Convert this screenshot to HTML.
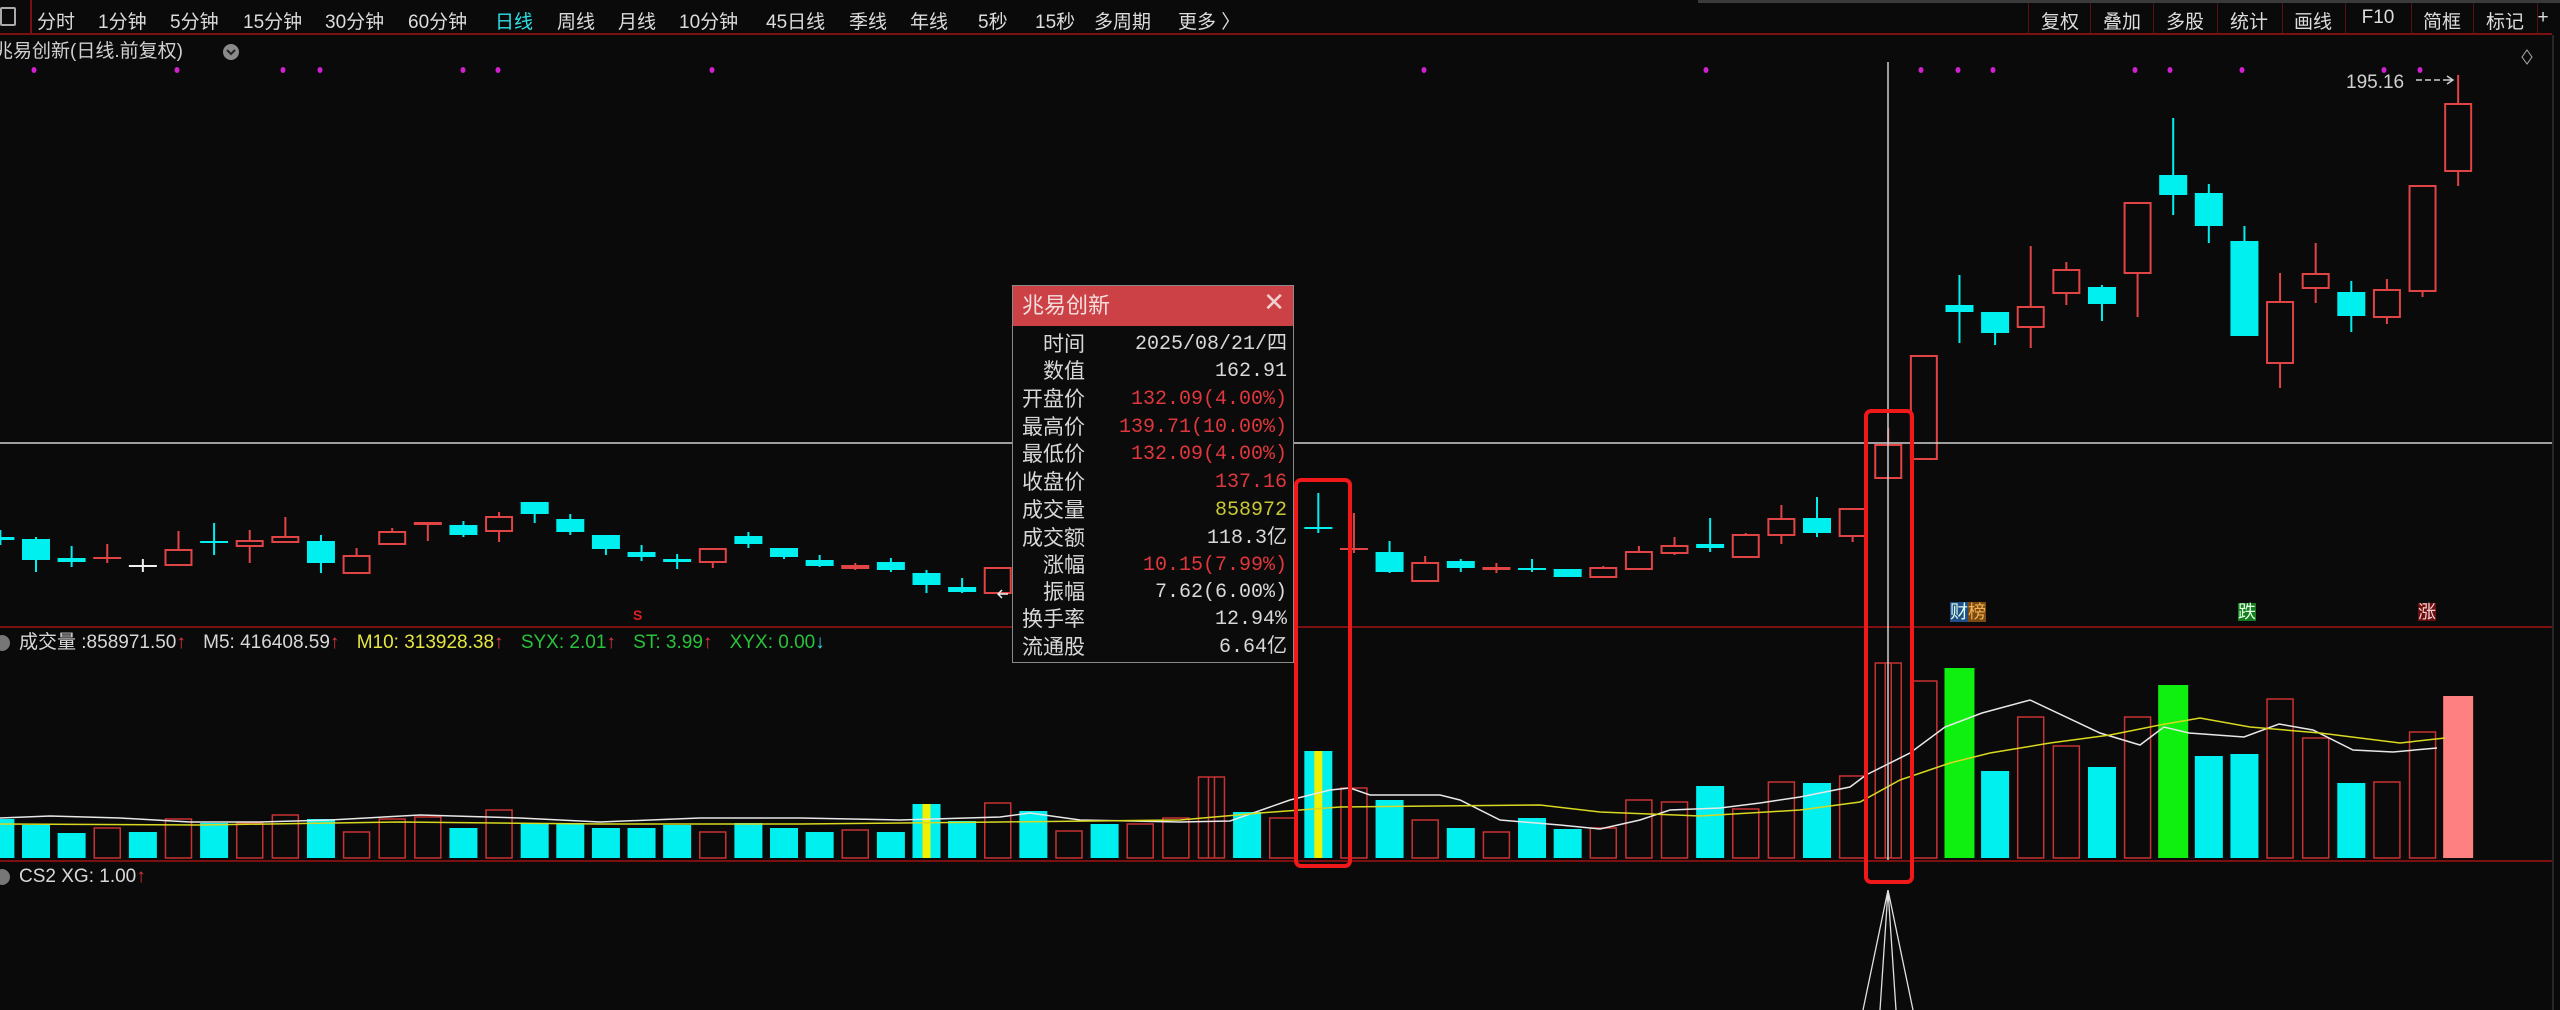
<!DOCTYPE html>
<html><head><meta charset="utf-8">
<style>
*{margin:0;padding:0;box-sizing:border-box}
body{width:2560px;height:1010px;background:#0a0a0a;overflow:hidden;position:relative;font-family:"Liberation Sans","Noto Sans CJK SC",sans-serif;color:#d8d8d8}
.t{position:absolute;white-space:nowrap;line-height:1}
#tb span{position:absolute;top:7px;font-size:19px;color:#dcdcdc}
.rb{position:absolute;top:7px;font-size:19px;color:#dcdcdc;width:60px;text-align:center}
#tip{position:absolute;left:1012px;top:285px;width:282px;height:378px;background:#0b0b0b;border:1px solid #8a8a8a;z-index:5}
#tip .hd{height:40px;background:#cc4145;color:#f4dede;font-size:22px;padding:8px 0 0 9px;position:relative;line-height:24px}
#tip .hd b{position:absolute;right:8px;top:4px;font-weight:normal;font-size:26px;color:#f0d0d0}
#tip .r{position:absolute;left:0;width:280px;height:27px;font-size:21px;line-height:27px}
#tip .l{position:absolute;right:208px;top:0;color:#d8d8d8;line-height:27px}
#tip .v{position:absolute;right:6px;top:0;font-family:"Liberation Mono","Liberation Sans",monospace;font-size:20px;line-height:27px}
.red{color:#e0373c}.wh{color:#d8d8d8}.yl{color:#c9c933}
</style></head><body>
<svg id="g" width="2560" height="1010" style="position:absolute;left:0;top:0"></svg>

<div id="tb">
<div style="position:absolute;left:0;top:7px;width:16px;height:19px;border:2px solid #aaa;border-radius:2px"></div>
<div style="position:absolute;left:30px;top:0;width:2px;height:34px;background:#7a1010"></div>
<span style="left:37px">分时</span><span style="left:98px">1分钟</span><span style="left:170px">5分钟</span><span style="left:243px">15分钟</span><span style="left:325px">30分钟</span><span style="left:408px">60分钟</span><span style="left:495px;color:#2fe0e8">日线</span><span style="left:557px">周线</span><span style="left:618px">月线</span><span style="left:679px">10分钟</span><span style="left:766px">45日线</span><span style="left:849px">季线</span><span style="left:910px">年线</span><span style="left:978px">5秒</span><span style="left:1035px">15秒</span><span style="left:1094px">多周期</span><span style="left:1178px">更多 〉</span>
</div>
<div class="rb" style="left:2030px">复权</div><div class="rb" style="left:2092px">叠加</div><div class="rb" style="left:2155px">多股</div><div class="rb" style="left:2219px">统计</div><div class="rb" style="left:2283px">画线</div><div class="rb" style="left:2348px">F10</div><div class="rb" style="left:2412px">简框</div><div class="rb" style="left:2475px">标记</div><div class="rb" style="left:2528px;width:30px">+</div>

<div class="t" style="left:-6px;top:42px;font-size:19px;color:#d0d0d0">兆易创新(日线.前复权)</div>
<div class="t" style="left:2346px;top:73px;font-size:19px;color:#d0d0d0">195.16</div>

<div class="t" style="left:19px;top:633px;font-size:19px">
<span class="wh">成交量 :858971.50</span><span class="red">↑</span>
<span class="wh" style="margin-left:12px">M5: 416408.59</span><span class="red">↑</span>
<span class="yl" style="margin-left:12px;color:#e6e640">M10: 313928.38</span><span class="red">↑</span>
<span style="margin-left:12px;color:#29c23a">SYX: 2.01</span><span class="red">↑</span>
<span style="margin-left:12px;color:#29c23a">ST: 3.99</span><span class="red">↑</span>
<span style="margin-left:12px;color:#29c23a">XYX: 0.00</span><span style="color:#2fd8e8">↓</span>
</div>
<div class="t" style="left:19px;top:867px;font-size:19px"><span class="wh">CS2 XG: 1.00</span><span class="red">↑</span></div>

<div class="t" style="left:1950px;top:603px;font-size:18px;color:#fff"><span style="background:#1f4f86;color:#dfe">财</span><span style="background:#7a4a12;color:#f3b050">榜</span></div>
<div class="t" style="left:2238px;top:603px;font-size:18px;background:#167a20;color:#dfd">跌</div>
<div class="t" style="left:2418px;top:603px;font-size:18px;background:#6a1010;color:#f8d0d0">涨</div>
<div class="t" style="left:633px;top:608px;font-size:14px;color:#e02020;font-weight:bold">S</div>

<div id="tip">
<div class="hd">兆易创新<b>✕</b></div>
<div class="r" style="top:45px"><span class="l">时间</span><span class="v wh">2025/08/21/四</span></div>
<div class="r" style="top:72px"><span class="l">数值</span><span class="v wh">162.91</span></div>
<div class="r" style="top:100px"><span class="l">开盘价</span><span class="v red">132.09(4.00%)</span></div>
<div class="r" style="top:128px"><span class="l">最高价</span><span class="v red">139.71(10.00%)</span></div>
<div class="r" style="top:155px"><span class="l">最低价</span><span class="v red">132.09(4.00%)</span></div>
<div class="r" style="top:183px"><span class="l">收盘价</span><span class="v red">137.16</span></div>
<div class="r" style="top:211px"><span class="l">成交量</span><span class="v yl">858972</span></div>
<div class="r" style="top:239px"><span class="l">成交额</span><span class="v wh">118.3亿</span></div>
<div class="r" style="top:266px"><span class="l">涨幅</span><span class="v red">10.15(7.99%)</span></div>
<div class="r" style="top:293px"><span class="l">振幅</span><span class="v wh">7.62(6.00%)</span></div>
<div class="r" style="top:320px"><span class="l">换手率</span><span class="v wh">12.94%</span></div>
<div class="r" style="top:348px"><span class="l">流通股</span><span class="v wh">6.64亿</span></div>
</div>

<script>
var g=document.getElementById('g'),s='';
function cx(i){return 36+35.62*i}
s+='<rect x="1698" y="0" width="862" height="3" fill="#3a3a3a"/>';
s+='<rect x="0" y="33" width="2552" height="2" fill="#7a1010"/>';
[2028,2090,2153,2217,2282,2345,2411,2473,2537].forEach(function(x){s+='<rect x="'+x+'" y="3" width="1" height="30" fill="#5a1010"/>'});
s+='<line x1="2553" y1="35" x2="2553" y2="1010" stroke="#444"/>';
s+='<circle cx="231" cy="52" r="8" fill="#8a8a8a"/><path d="M227 50l4 4 4-4" stroke="#222" stroke-width="2" fill="none"/>';
s+='<path d="M2527 50l5 7-5 7-5-7z" stroke="#aaa" fill="none"/>';
[34,177,283,320,463,498,712,1424,1706,1921,1958,1993,2135,2170,2242,2384,2420].forEach(function(x){s+='<ellipse cx="'+x+'" cy="70" rx="2.5" ry="3" fill="#d020d0"/>'});
s+='<rect x="0" y="626" width="2552" height="2" fill="#7a1010"/><rect x="0" y="860" width="2552" height="2" fill="#7a1010"/>';
s+='<circle cx="2" cy="643" r="8" fill="#777"/><circle cx="2" cy="877" r="8" fill="#777"/>';
var C=[[-1,'c',537,540,530,545],[0,'c',539,560,537,572],[1,'c',558,562,546,567],[2,'rf',557,559,544,563],[3,'w',565,567,559,572],[4,'r',550,565,531,565],[5,'c',541,542,523,555],[6,'r',541,546,530,563],[7,'r',537,542,517,542],[8,'c',541,563,535,573],[9,'r',556,573,548,573],[10,'r',532,544,528,544],[11,'rf',522,525,522,541],[12,'c',525,535,521,537],[13,'r',517,531,512,542],[14,'c',502,514,502,523],[15,'c',519,532,514,535],[16,'c',535,549,535,555],[17,'c',552,557,545,561],[18,'c',559,562,554,569],[19,'r',549,562,549,568],[20,'c',536,544,532,548],[21,'c',548,557,548,559],[22,'c',560,566,555,567],[23,'rf',565,569,563,570],[24,'c',562,570,558,572],[25,'c',573,585,570,593],[26,'c',587,592,578,593],[27,'r',568,593,568,593],[36,'c',527,529,493,533],[37,'rf',548,550,513,553],[38,'c',552,572,541,573],[39,'r',563,581,556,581],[40,'c',561,568,559,572],[41,'rf',567,570,563,573],[42,'c',568,570,559,572],[43,'c',569,577,569,577],[44,'r',568,577,566,577],[45,'r',552,569,546,569],[46,'r',546,553,537,555],[47,'c',544,548,518,552],[48,'r',535,557,533,557],[49,'r',519,535,505,544],[50,'c',518,533,497,537],[51,'r',509,536,509,542],[52,'r',445,478,428,478],[53,'r',356,459,356,459],[54,'c',305,312,275,343],[55,'c',312,333,312,345],[56,'r',307,327,246,348],[57,'r',270,293,262,305],[58,'c',287,304,285,321],[59,'r',203,273,203,317],[60,'c',175,195,118,215],[61,'c',193,226,184,243],[62,'c',241,336,226,336],[63,'r',302,363,273,388],[64,'r',274,288,243,303],[65,'c',292,316,281,332],[66,'r',290,317,279,324],[67,'r',186,291,186,297],[68,'r',104,171,75,186]];
C.forEach(function(d){var x=cx(d[0]),t=d[1],col=t=='c'?'#00f0f0':(t=='w'?'#f0f0f0':'#e04444');var h=Math.max(d[3]-d[2],2);
s+='<line x1="'+x+'" y1="'+d[4]+'" x2="'+x+'" y2="'+d[5]+'" stroke="'+col+'" stroke-width="2"/>';
if(t=='r')s+='<rect x="'+(x-13)+'" y="'+d[2]+'" width="26" height="'+h+'" fill="#0a0a0a" stroke="'+col+'" stroke-width="2"/>';
else s+='<rect x="'+(x-14)+'" y="'+d[2]+'" width="28" height="'+h+'" fill="'+col+'"/>';});
var V=[[-1,'c',819],[0,'c',825],[1,'c',833],[2,'r',828],[3,'c',832],[4,'r',819],[5,'c',823],[6,'r',823],[7,'r',815],[8,'c',819],[9,'r',832],[10,'r',819],[11,'r',817],[12,'c',828],[13,'r',810],[14,'c',823],[15,'c',823],[16,'c',828],[17,'c',828],[18,'c',825],[19,'r',832],[20,'c',823],[21,'c',828],[22,'c',832],[23,'r',830],[24,'c',832],[25,'y',804],[26,'c',821],[27,'r',803],[28,'c',811],[29,'r',831],[30,'c',824],[31,'r',824],[32,'r',818],[33,'rr',777],[34,'c',812],[35,'r',818],[36,'y',751],[37,'r',788],[38,'c',800],[39,'r',820],[40,'c',828],[41,'r',832],[42,'c',818],[43,'c',829],[44,'r',828],[45,'r',800],[46,'r',802],[47,'c',786],[48,'r',809],[49,'r',782],[50,'c',783],[51,'r',776],[52,'rr',663],[53,'r',681],[54,'g',668],[55,'c',771],[56,'r',717],[57,'r',746],[58,'c',767],[59,'r',717],[60,'g',685],[61,'c',756],[62,'c',754],[63,'r',699],[64,'r',738],[65,'c',783],[66,'r',782],[67,'r',732],[68,'p',696]];
V.forEach(function(d){var x=cx(d[0]),t=d[1],y=d[2],h=858-y;
if(t=='r'||t=='rr'){s+='<rect x="'+(x-13)+'" y="'+y+'" width="26" height="'+h+'" fill="none" stroke="#c83232" stroke-width="1.5"/>';if(t=='rr')s+='<line x1="'+(x-3)+'" y1="'+y+'" x2="'+(x-3)+'" y2="858" stroke="#c83232" stroke-width="1.5"/><line x1="'+(x+3)+'" y1="'+y+'" x2="'+(x+3)+'" y2="858" stroke="#c83232" stroke-width="1.5"/>';}
else{var c=t=='g'?'#10f010':(t=='p'?'#ff8080':'#00f0f0');var w=t=='g'||t=='p'?30:28;s+='<rect x="'+(x-w/2)+'" y="'+y+'" width="'+w+'" height="'+h+'" fill="'+c+'"/>';if(t=='y')s+='<rect x="'+(x-4)+'" y="'+y+'" width="8" height="'+h+'" fill="#f0f000"/>';}});
var W=[[0,818],[50,816],[120,818],[190,822],[260,822],[330,820],[420,815],[520,818],[600,822],[700,818],[800,818],[900,820],[1000,817],[1030,813],[1080,820],[1180,822],[1230,821],[1290,800],[1330,790],[1350,788],[1370,795],[1440,795],[1460,800],[1500,820],[1560,825],[1600,829],[1640,820],[1670,810],[1720,808],[1760,803],[1800,797],[1850,787],[1866,775],[1910,753],[1945,727],[1982,713],[2030,700],[2100,733],[2140,745],[2164,727],[2189,733],[2244,737],[2279,724],[2313,730],[2353,750],[2393,752],[2437,748]];
var Y=[[0,824],[200,825],[400,822],[600,824],[800,824],[1000,822],[1180,820],[1260,813],[1340,807],[1540,805],[1600,812],[1700,816],[1800,810],[1860,802],[1900,780],[1950,763],[1990,753],[2050,743],[2110,735],[2160,725],[2200,718],[2250,727],[2320,733],[2400,743],[2445,738]];
s+='<polyline points="'+W.join(' ')+'" fill="none" stroke="#e8e8e8" stroke-width="1.5"/>';
s+='<polyline points="'+Y.join(' ')+'" fill="none" stroke="#d8d820" stroke-width="1.5"/>';
s+='<line x1="0" y1="443" x2="2552" y2="443" stroke="#cfcfcf" stroke-width="1.5"/>';
s+='<line x1="1888" y1="62" x2="1888" y2="860" stroke="#cfcfcf" stroke-width="1.5"/>';
s+='<rect x="1296" y="480" width="54" height="386" rx="5" fill="none" stroke="#f01818" stroke-width="4"/>';
s+='<rect x="1866" y="411" width="46" height="471" rx="5" fill="none" stroke="#f01818" stroke-width="4"/>';
s+='<path d="M1888 890L1863 1010M1888 890L1913 1010M1888 890L1880 1010M1888 890L1896 1010" stroke="#e0e0e0" stroke-width="1.3" fill="none"/>';
s+='<path d="M2416 80h6m3 0h6m3 0h6m3 0h10m-6-4l6 4-6 4" stroke="#ccc" stroke-width="1.5" fill="none"/>';
s+='<path d="M1008 594h-10m4-4l-4 4 4 4" stroke="#eee" stroke-width="1.5" fill="none"/>';
g.innerHTML=s;
</script>
</body></html>
